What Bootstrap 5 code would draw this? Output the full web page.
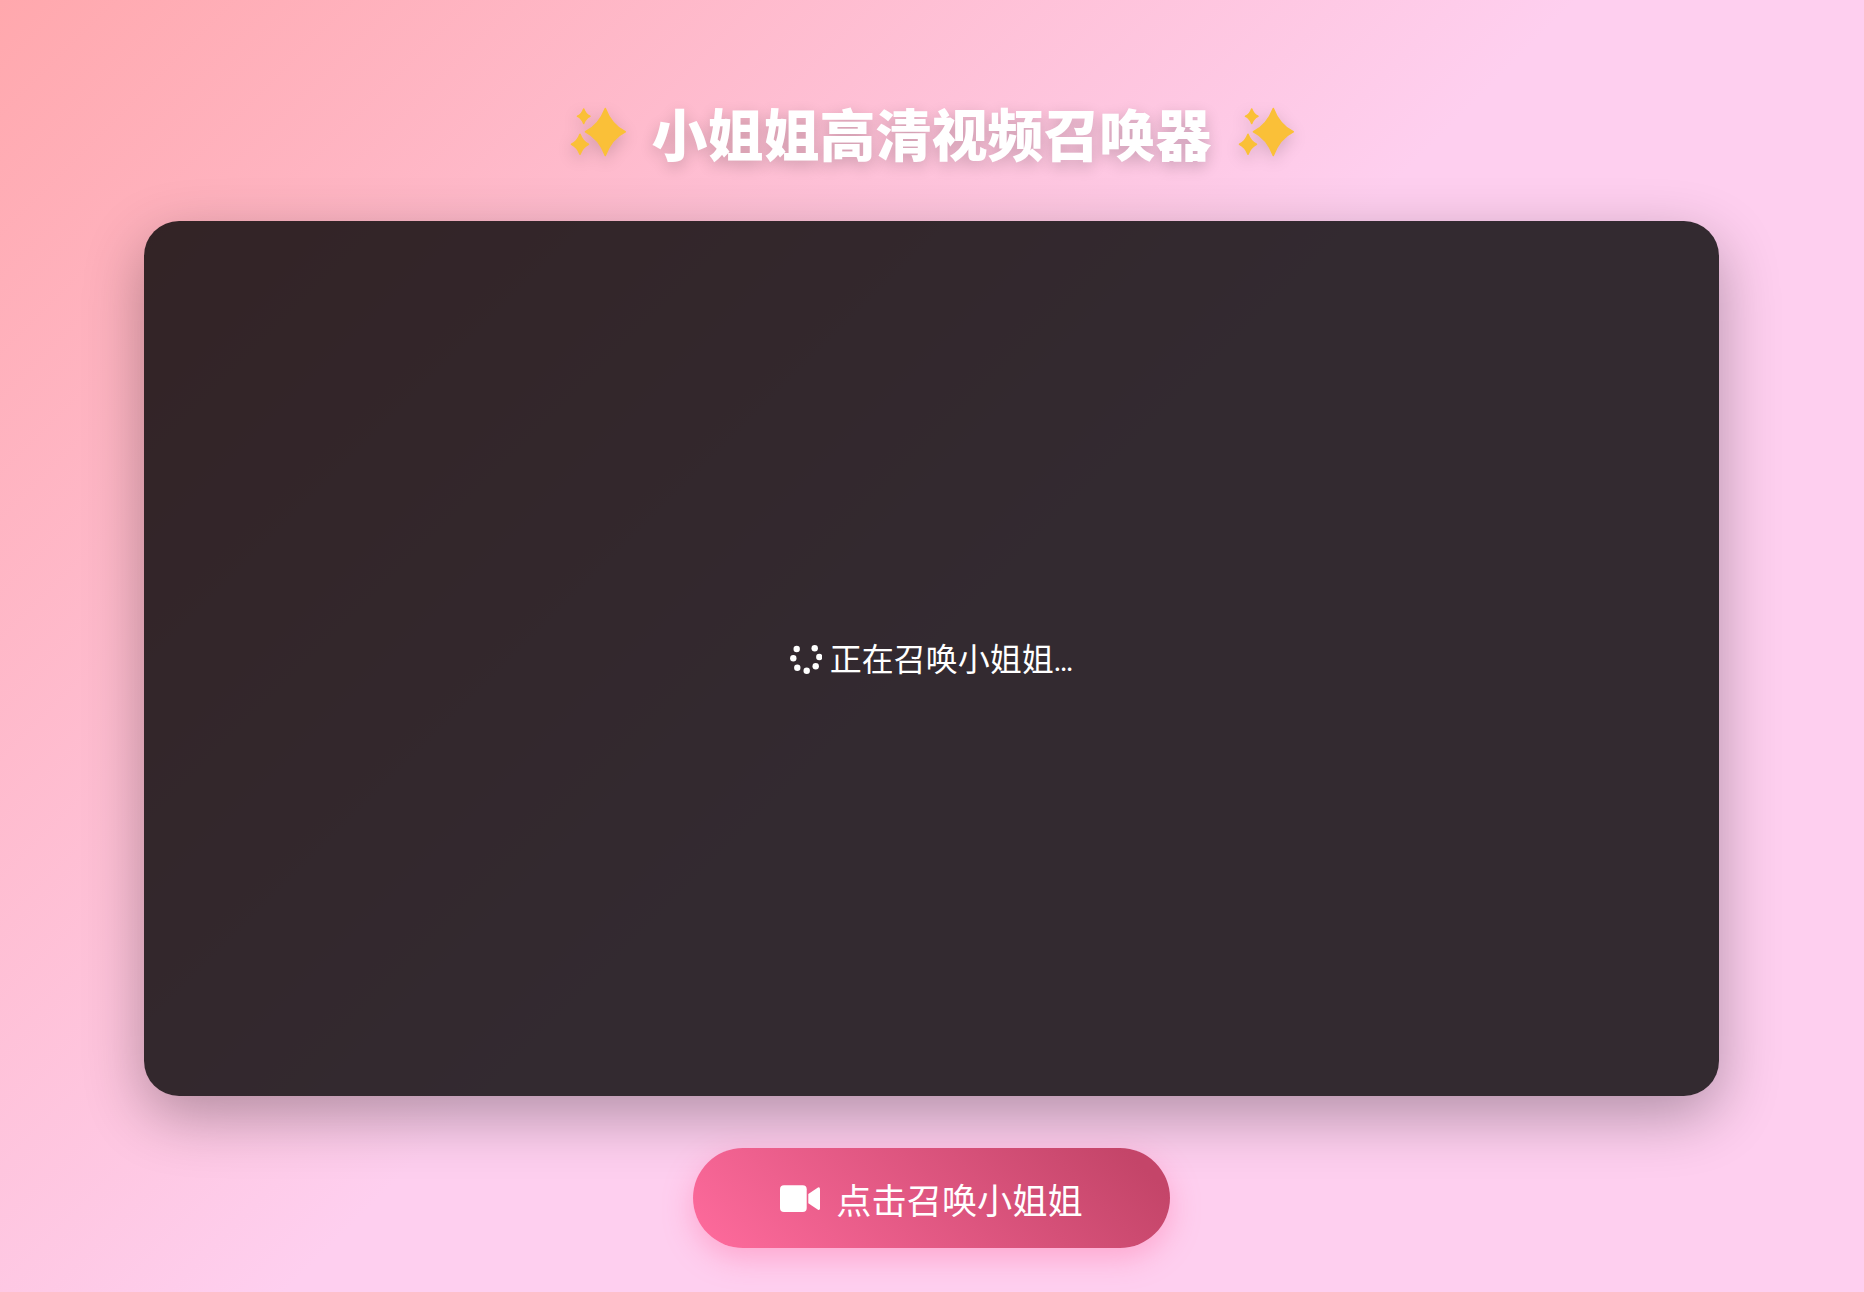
<!DOCTYPE html>
<html lang="zh">
<head>
<meta charset="utf-8">
<title>小姐姐高清视频召唤器</title>
<link href="https://cdn.jsdelivr.net/npm/bootstrap@5.3.0/dist/css/bootstrap.min.css" rel="stylesheet">
<style>
html, body { height: 100%; }
body {
  background: linear-gradient(135deg, #ffa8ad 0%, #fecfef 50%, #fecfef 100%);
  font-family: "Noto Sans CJK SC", "Liberation Sans", sans-serif;
  color: #fff;
  overflow: hidden;
}
.page-wrap { height: 1292px; padding: 94px 145px 44px 144px; }
.hero-title {
  font-size: 56px; font-weight: 900; line-height: 76px; height: 76px; margin: 0 0 51px;
  color: #fff; text-shadow: 0 5px 15px rgba(0,0,0,.2); gap: 22px;
}
.spark { width: 64px; height: 64px; filter: drop-shadow(0 5px 8px rgba(0,0,0,.16)); }
.video-box {
  width: 100%; height: 875px; border-radius: 35px;
  background: rgba(0,0,0,.8);
  box-shadow: 0 20px 60px rgba(0,0,0,.3);
  margin-bottom: 52px;
}
.load-text { font-size: 32px; line-height: 44px; gap: 8px; padding: 0 1px 0 0; }
.load-dots { font-size: 26px; letter-spacing: -1px; }
.spin-mark { width: 32px; height: 32px; }
.call-btn {
  width: 477px; height: 100px; border: 0; border-radius: 50px; color: #fff;
  font-size: 35.2px; gap: 16px;
  background: linear-gradient(45deg, #ff6b9d 0%, #c44569 92%);
  box-shadow: 0 10px 30px rgba(255,107,157,.4);
}
.call-btn:hover, .call-btn:focus { color: #fff; background: linear-gradient(45deg, #ff6b9d 0%, #c44569 92%); }
.call-label { padding-top: 2px; }
.cam-mark { width: 40px; height: 28px; margin-top: 2px; }
</style>
</head>
<body>
<div class="page-wrap d-flex flex-column align-items-center">
  <h1 class="hero-title d-flex align-items-center justify-content-center">
    <svg class="spark" viewBox="5 6.5 64 64" aria-hidden="true"><g fill="#fac038" stroke="#fac038" stroke-width="1.6" stroke-linejoin="round"><path d="M44.3 15 Q50.5 31.5 64.2 38.3 Q50.5 45 44.3 62 Q38 45 24.5 38.3 Q38 31.5 44.3 15Z"/><path d="M22.7 15.5 Q24.5 20.8 29 22.7 Q24.5 24.7 22.7 30 Q21 24.7 16.5 22.7 Q21 20.8 22.7 15.5Z"/><path d="M19 40.7 Q21.5 47.8 27.5 50.7 Q21.5 53.7 19 60.7 Q16.5 53.7 10.5 50.7 Q16.5 47.8 19 40.7Z"/></g></svg>
    <span>小姐姐高清视频召唤器</span>
    <svg class="spark" viewBox="5 6.5 64 64" aria-hidden="true"><g fill="#fac038" stroke="#fac038" stroke-width="1.6" stroke-linejoin="round"><path d="M44.3 15 Q50.5 31.5 64.2 38.3 Q50.5 45 44.3 62 Q38 45 24.5 38.3 Q38 31.5 44.3 15Z"/><path d="M22.7 15.5 Q24.5 20.8 29 22.7 Q24.5 24.7 22.7 30 Q21 24.7 16.5 22.7 Q21 20.8 22.7 15.5Z"/><path d="M19 40.7 Q21.5 47.8 27.5 50.7 Q21.5 53.7 19 60.7 Q16.5 53.7 10.5 50.7 Q16.5 47.8 19 40.7Z"/></g></svg>
  </h1>
  <div class="video-box d-flex align-items-center justify-content-center">
    <div class="load-text d-flex align-items-center">
      <svg class="spin-mark" viewBox="0 0 32 32" aria-hidden="true"><g fill="#fff"><circle cx="6.7" cy="6" r="3.2"/><circle cx="24.7" cy="5.3" r="3.2"/><circle cx="29.3" cy="14" r="3.2"/><circle cx="25.7" cy="23.3" r="3.2"/><circle cx="16.7" cy="27.7" r="3.2"/><circle cx="7.3" cy="24.7" r="3.2"/><circle cx="3.3" cy="15.3" r="3.2"/></g></svg>
      <span>正在召唤小姐姐<span class="load-dots">...</span></span>
    </div>
  </div>
  <button class="call-btn btn d-flex align-items-center justify-content-center" type="button">
    <svg class="cam-mark" viewBox="0 0 40 28" aria-hidden="true"><rect x="0" y="0.3" width="26.7" height="26.7" rx="4" fill="#fff"/><path d="M28.3 9 L38 2.5 Q40 1.8 40 4.3 L40 23.3 Q40 25.6 38 24.8 L28.3 18.3Z" fill="#fff"/></svg>
    <span class="call-label">点击召唤小姐姐</span>
  </button>
</div>
<script src="https://cdn.jsdelivr.net/npm/bootstrap@5.3.0/dist/js/bootstrap.bundle.min.js"></script>
</body>
</html>
